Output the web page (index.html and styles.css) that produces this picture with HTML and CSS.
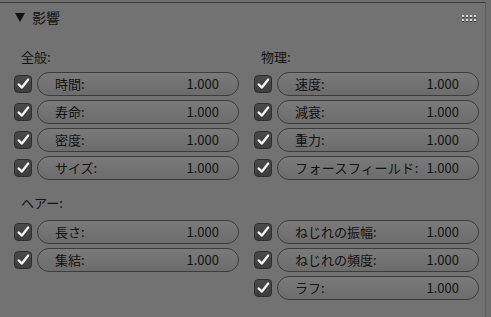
FILE: index.html
```html
<!DOCTYPE html>
<html lang="ja">
<head>
<meta charset="utf-8">
<link rel="stylesheet" href="styles.css">
</head>
<body>
<div class="panel">
  <div class="header">
    <svg class="tri" width="10" height="9" viewBox="0 0 10 9"><path d="M0 0 H10 L5 9 Z" fill="#111"/></svg>
    <span class="title">影響</span>
    <div class="grip">
      <i></i><i></i><i></i><i></i><i></i><i></i><i></i><i></i>
    </div>
  </div>
  <div class="body">
    <div class="section">
      <div class="col">
        <div class="label">全般:</div>
        <div class="row"><span class="cb"><svg viewBox="0 0 18 18"><path d="M4 9.5 L7.8 13 L14.8 4"/></svg></span><div class="field"><span>時間:</span><span>1.000</span></div></div>
        <div class="row"><span class="cb"><svg viewBox="0 0 18 18"><path d="M4 9.5 L7.8 13 L14.8 4"/></svg></span><div class="field"><span>寿命:</span><span>1.000</span></div></div>
        <div class="row"><span class="cb"><svg viewBox="0 0 18 18"><path d="M4 9.5 L7.8 13 L14.8 4"/></svg></span><div class="field"><span>密度:</span><span>1.000</span></div></div>
        <div class="row"><span class="cb"><svg viewBox="0 0 18 18"><path d="M4 9.5 L7.8 13 L14.8 4"/></svg></span><div class="field"><span>サイズ:</span><span>1.000</span></div></div>
      </div>
      <div class="col">
        <div class="label">物理:</div>
        <div class="row"><span class="cb"><svg viewBox="0 0 18 18"><path d="M4 9.5 L7.8 13 L14.8 4"/></svg></span><div class="field"><span>速度:</span><span>1.000</span></div></div>
        <div class="row"><span class="cb"><svg viewBox="0 0 18 18"><path d="M4 9.5 L7.8 13 L14.8 4"/></svg></span><div class="field"><span>減衰:</span><span>1.000</span></div></div>
        <div class="row"><span class="cb"><svg viewBox="0 0 18 18"><path d="M4 9.5 L7.8 13 L14.8 4"/></svg></span><div class="field"><span>重力:</span><span>1.000</span></div></div>
        <div class="row"><span class="cb"><svg viewBox="0 0 18 18"><path d="M4 9.5 L7.8 13 L14.8 4"/></svg></span><div class="field"><span class="tight">フォースフィールド:</span><span>1.000</span></div></div>
      </div>
    </div>
    <div class="section second">
      <div class="col">
        <div class="label">ヘアー:</div>
        <div class="row"><span class="cb"><svg viewBox="0 0 18 18"><path d="M4 9.5 L7.8 13 L14.8 4"/></svg></span><div class="field"><span>長さ:</span><span>1.000</span></div></div>
        <div class="row"><span class="cb"><svg viewBox="0 0 18 18"><path d="M4 9.5 L7.8 13 L14.8 4"/></svg></span><div class="field"><span>集結:</span><span>1.000</span></div></div>
      </div>
      <div class="col">
        <div class="label"></div>
        <div class="row"><span class="cb"><svg viewBox="0 0 18 18"><path d="M4 9.5 L7.8 13 L14.8 4"/></svg></span><div class="field"><span>ねじれの振幅:</span><span>1.000</span></div></div>
        <div class="row"><span class="cb"><svg viewBox="0 0 18 18"><path d="M4 9.5 L7.8 13 L14.8 4"/></svg></span><div class="field"><span>ねじれの頻度:</span><span>1.000</span></div></div>
        <div class="row"><span class="cb"><svg viewBox="0 0 18 18"><path d="M4 9.5 L7.8 13 L14.8 4"/></svg></span><div class="field"><span>ラフ:</span><span>1.000</span></div></div>
      </div>
    </div>
  </div>
</div>
</body>
</html>
```

FILE: styles.css
```css
html, body {
  margin: 0;
  padding: 0;
}
body {
  width: 491px;
  height: 317px;
  overflow: hidden;
  background: #6e6e6e;
  font-family: "Noto Sans CJK JP", "DejaVu Sans", sans-serif;
  font-size: 13px;
  color: #121212;
}
.panel {
  margin-top: 2px;
  width: 486px;
  height: 315px;
  background: #727272;
  border-top: 1px solid #3a3a3a;
  border-right: 1px solid #5a5a5a;
  box-sizing: border-box;
}
.header {
  display: flex;
  align-items: center;
  height: 28px;
  padding-left: 15px;
  padding-right: 9px;
}
.tri {
  display: block;
  margin-right: 7px;
  margin-top: 1px;
}
.title {
  line-height: 28px;
  font-size: 14px;
}
.grip {
  margin-left: auto;
  display: grid;
  grid-template-columns: repeat(4, 2px);
  grid-template-rows: repeat(2, 2px);
  column-gap: 2px;
  row-gap: 2px;
  margin-top: 1px;
}
.grip i {
  display: block;
  width: 2px;
  height: 2px;
  background: #d8d8d8;
  box-shadow: 0 1px 0 #3a3a3a;
}
.body {
  padding: 15px 0 0 14px;
}
.section {
  display: grid;
  grid-template-columns: 225px 225px;
  column-gap: 15px;
}
.section.second {
  margin-top: 14px;
}
.second .label {
  line-height: 18px;
}
.col {
  display: flex;
  flex-direction: column;
  gap: 4px;
}
.label {
  height: 22px;
  line-height: 22px;
  padding-left: 7px;
}
.row {
  display: flex;
  align-items: center;
  height: 24px;
}
.cb {
  width: 18px;
  height: 18px;
  box-sizing: border-box;
  border: 1px solid #2e2e2e;
  border-radius: 4px;
  background: linear-gradient(#4a4a4a, #3c3c3c);
  margin-right: 5px;
  flex: none;
}
.cb svg {
  display: block;
  width: 16px;
  height: 16px;
  fill: none;
  stroke: #f2f2f2;
  stroke-width: 2.6;
  stroke-linecap: round;
  stroke-linejoin: round;
}
.field {
  flex: none;
  width: 202px;
  height: 24px;
  box-sizing: border-box;
  border: 1px solid #3c3c3c;
  border-radius: 12px;
  background: linear-gradient(#7a7a7a, #6c6c6c);
  display: flex;
  justify-content: space-between;
  align-items: center;
  padding: 0 19px 0 17px;
  line-height: 22px;
  white-space: nowrap;
}
.tight {
  letter-spacing: 0.4px;
}
```
